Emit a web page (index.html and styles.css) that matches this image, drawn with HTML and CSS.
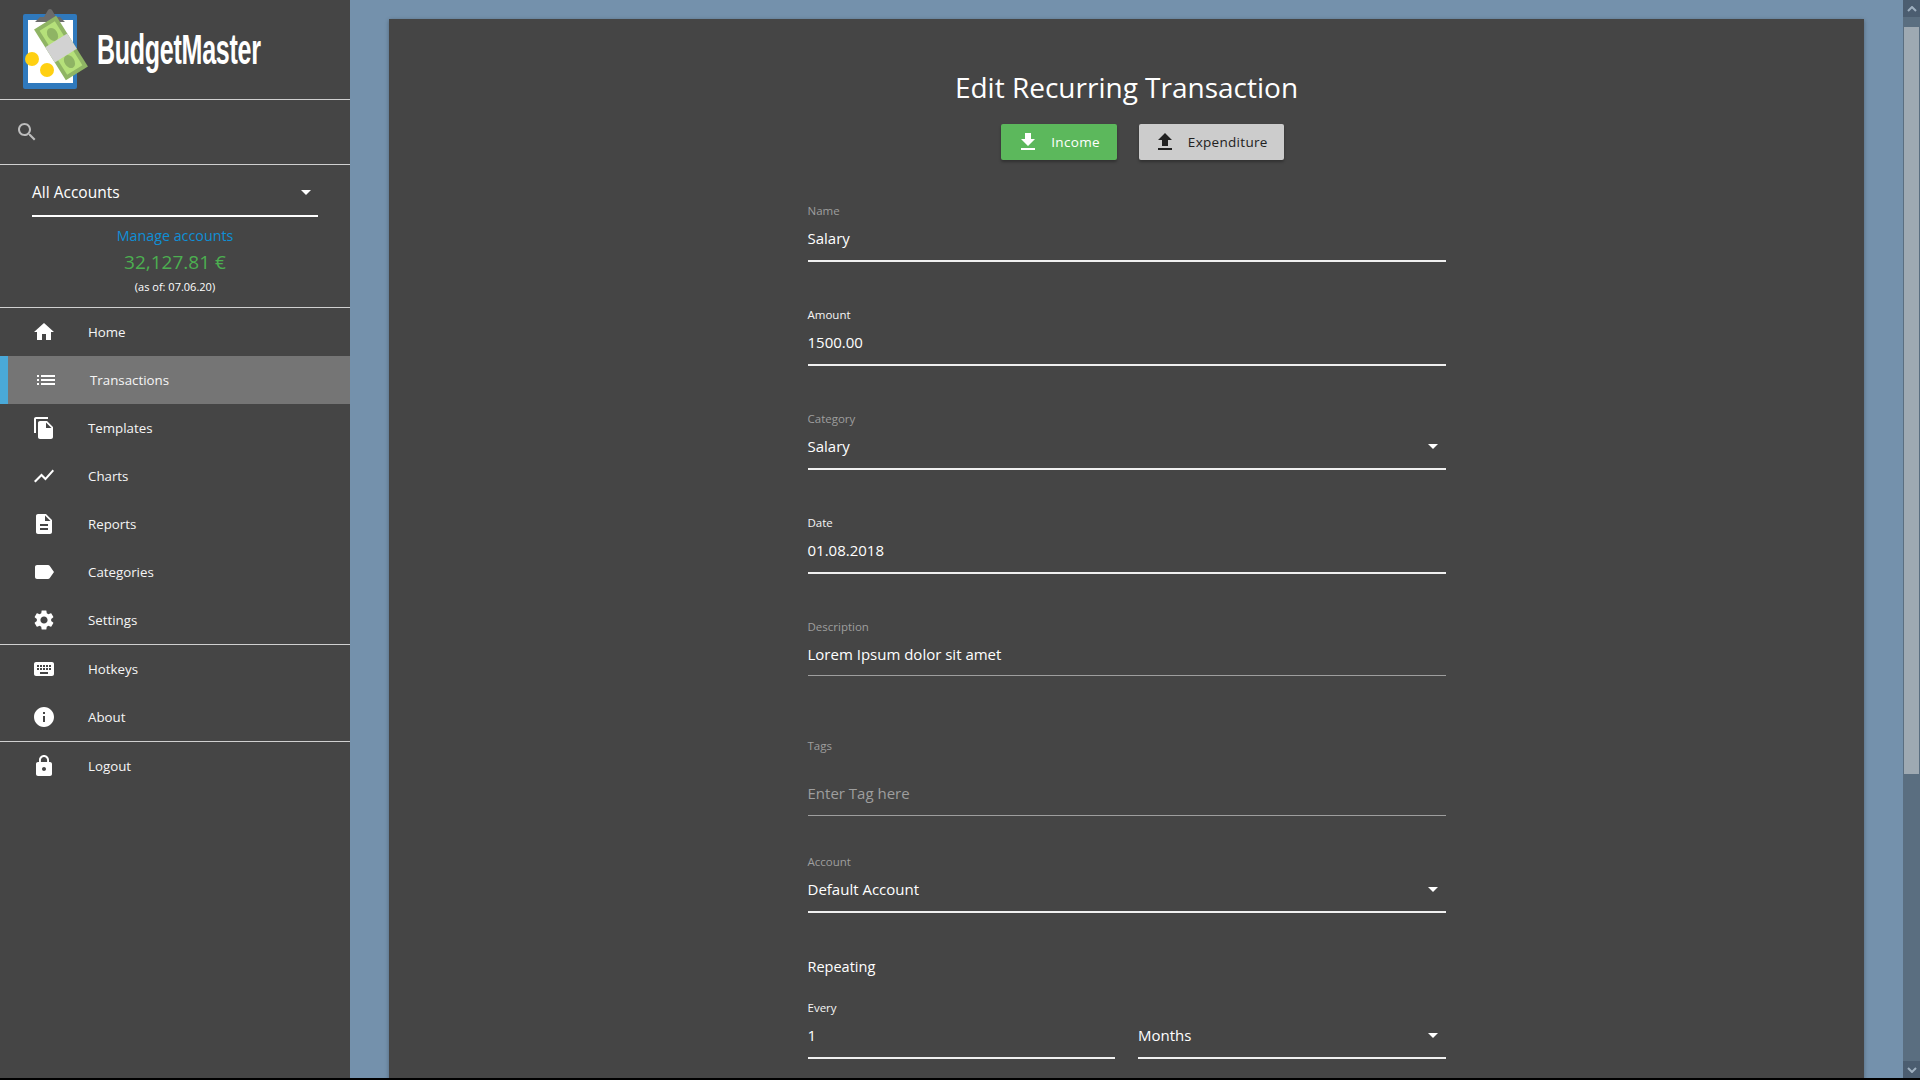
FILE: index.html
```html
<!DOCTYPE html>
<html lang="en">
<head>
    <meta charset="UTF-8">
    <meta name="viewport" content="width=device-width, initial-scale=1.0">
    <title>BudgetMaster - Edit Recurring Transaction</title>
    <link rel="stylesheet" href="styles.css">
</head>
<body>

<div class="app">
    <!-- Sidebar -->
    <nav class="sidebar">
        <div class="brand">
            <svg class="brand-logo" viewBox="0 0 70 84" width="70" height="84">
                <rect x="1" y="6" width="54" height="75" rx="2" fill="#2f79bd"/>
                <rect x="6" y="12" width="45" height="63" fill="#fff"/>
                <path d="M13 14l5-5h4l4-7q2-2 4 0l4 7h4l5 5z" fill="#6b6b6b"/>
                <g transform="rotate(-32 39 40)">
                    <rect x="26" y="10" width="26" height="60" fill="#8fb464"/>
                    <rect x="30" y="14" width="18" height="52" fill="#b5e07a"/>
                    <ellipse cx="39" cy="24" rx="5" ry="7" fill="#8fb464"/>
                    <ellipse cx="39" cy="56" rx="5" ry="7" fill="#8fb464"/>
                    <rect x="26" y="31" width="26" height="18" fill="#d2d2d2"/>
                </g>
                <circle cx="10" cy="51" r="7" fill="#ffd012"/>
                <circle cx="25" cy="62" r="7" fill="#ffd012"/>
            </svg>
            <span class="brand-name">BudgetMaster</span>
        </div>

        <div class="search">
            <svg class="search-icon" viewBox="0 0 24 24"><path d="M15.5 14h-.79l-.28-.27C15.41 12.59 16 11.11 16 9.5 16 5.91 13.09 3 9.5 3S3 5.91 3 9.5 5.91 16 9.5 16c1.61 0 3.09-.59 4.23-1.57l.27.28v.79l5 4.99L20.49 19l-4.99-5zm-6 0C7.01 14 5 11.99 5 9.5S7.01 5 9.5 5 14 7.01 14 9.5 11.99 14 9.5 14z"/></svg>
        </div>

        <div class="accounts">
            <div class="account-select">
                <span>All Accounts</span>
                <span class="caret"></span>
            </div>
            <a class="manage-link" href="#">Manage accounts</a>
            <div class="balance">32,127.81 €</div>
            <div class="balance-date">(as of: 07.06.20)</div>
        </div>

        <ul class="nav-group">
            <li class="nav-item"><svg class="nav-icon" viewBox="0 0 24 24"><path d="M10 20v-6h4v6h5v-8h3L12 3 2 12h3v8z"/></svg>Home</li>
            <li class="nav-item active"><svg class="nav-icon" viewBox="0 0 24 24"><path d="M3 13h2v-2H3v2zm0 4h2v-2H3v2zm0-8h2V7H3v2zm4 4h14v-2H7v2zm0 4h14v-2H7v2zM7 7v2h14V7H7z"/></svg>Transactions</li>
            <li class="nav-item"><svg class="nav-icon" viewBox="0 0 24 24"><path d="M16 1H4c-1.1 0-2 .9-2 2v14h2V3h12V1zm-1 4l6 6v10c0 1.1-.9 2-2 2H7.99C6.89 23 6 22.1 6 21l.01-14c0-1.1.89-2 1.99-2h7zm-1 7h5.5L14 6.5V12z"/></svg>Templates</li>
            <li class="nav-item"><svg class="nav-icon" viewBox="0 0 24 24"><path d="M3.5 18.49l6-6.01 4 4L22 6.92l-1.41-1.41-7.09 7.97-4-4L2 16.99z"/></svg>Charts</li>
            <li class="nav-item"><svg class="nav-icon" viewBox="0 0 24 24"><path d="M14 2H6c-1.1 0-1.99.9-1.99 2L4 20c0 1.1.89 2 1.99 2H18c1.1 0 2-.9 2-2V8l-6-6zm2 16H8v-2h8v2zm0-4H8v-2h8v2zm-3-5V3.5L18.5 9H13z"/></svg>Reports</li>
            <li class="nav-item"><svg class="nav-icon" viewBox="0 0 24 24"><path d="M17.63 5.84C17.27 5.33 16.67 5 16 5L5 5.01C3.9 5.01 3 5.9 3 7v10c0 1.1.9 1.99 2 1.99L16 19c.67 0 1.27-.33 1.63-.84L22 12l-4.37-6.16z"/></svg>Categories</li>
            <li class="nav-item"><svg class="nav-icon" viewBox="0 0 24 24"><path d="M19.14 12.94c.04-.3.06-.61.06-.94 0-.32-.02-.64-.07-.94l2.03-1.58c.18-.14.23-.41.12-.61l-1.92-3.32c-.12-.22-.37-.29-.59-.22l-2.39.96c-.5-.38-1.03-.7-1.62-.94l-.36-2.54c-.04-.24-.24-.41-.48-.41h-3.84c-.24 0-.43.17-.47.41l-.36 2.54c-.59.24-1.13.57-1.62.94l-2.39-.96c-.22-.08-.47 0-.59.22L2.74 8.87c-.12.21-.08.47.12.61l2.03 1.58c-.05.3-.09.63-.09.94s.02.64.07.94l-2.03 1.58c-.18.14-.23.41-.12.61l1.92 3.32c.12.22.37.29.59.22l2.39-.96c.5.38 1.03.7 1.62.94l.36 2.54c.05.24.24.41.48.41h3.84c.24 0 .44-.17.47-.41l.36-2.54c.59-.24 1.13-.56 1.62-.94l2.39.96c.22.08.47 0 .59-.22l1.92-3.32c.12-.22.07-.47-.12-.61l-2.01-1.58zM12 15.6c-1.98 0-3.6-1.62-3.6-3.6s1.62-3.6 3.6-3.6 3.6 1.62 3.6 3.6-1.62 3.6-3.6 3.6z"/></svg>Settings</li>
        </ul>
        <ul class="nav-group">
            <li class="nav-item"><svg class="nav-icon" viewBox="0 0 24 24"><path d="M20 5H4c-1.1 0-1.99.9-1.99 2L2 17c0 1.1.9 2 2 2h16c1.1 0 2-.9 2-2V7c0-1.1-.9-2-2-2zm-9 3h2v2h-2V8zm0 3h2v2h-2v-2zM8 8h2v2H8V8zm0 3h2v2H8v-2zm-1 2H5v-2h2v2zm0-3H5V8h2v2zm9 7H8v-2h8v2zm0-4h-2v-2h2v2zm0-3h-2V8h2v2zm3 3h-2v-2h2v2zm0-3h-2V8h2v2z"/></svg>Hotkeys</li>
            <li class="nav-item"><svg class="nav-icon" viewBox="0 0 24 24"><path d="M12 2C6.48 2 2 6.48 2 12s4.48 10 10 10 10-4.48 10-10S17.52 2 12 2zm1 15h-2v-6h2v6zm0-8h-2V7h2v2z"/></svg>About</li>
        </ul>
        <ul class="nav-group">
            <li class="nav-item"><svg class="nav-icon" viewBox="0 0 24 24"><path d="M18 8h-1V6c0-2.76-2.24-5-5-5S7 3.24 7 6v2H6c-1.1 0-2 .9-2 2v10c0 1.1.9 2 2 2h12c1.1 0 2-.9 2-2V10c0-1.1-.9-2-2-2zm-6 9c-1.1 0-2-.9-2-2s.9-2 2-2 2 .9 2 2-.9 2-2 2zm3.1-9H8.9V6c0-1.71 1.39-3.1 3.1-3.1 1.71 0 3.1 1.39 3.1 3.1v2z"/></svg>Logout</li>
        </ul>
    </nav>

    <!-- Main content -->
    <main class="main">
        <div class="card">
            <h1 class="title">Edit Recurring Transaction</h1>

            <div class="type-buttons">
                <button class="type-btn income">
                    <svg viewBox="0 0 24 24"><path d="M19 9h-4V3H9v6H5l7 7 7-7zM5 18v2h14v-2H5z"/></svg>
                    Income
                </button>
                <button class="type-btn expenditure">
                    <svg viewBox="0 0 24 24"><path d="M9 16h6v-6h4l-7-7-7 7h4v6zm-4 2h14v2H5z"/></svg>
                    Expenditure
                </button>
            </div>

            <form class="form">
                <div class="field">
                    <label class="field-label">Name</label>
                    <div class="field-value">Salary</div>
                </div>
                <div class="field">
                    <label class="field-label bright">Amount</label>
                    <div class="field-value">1500.00</div>
                </div>
                <div class="field">
                    <label class="field-label">Category</label>
                    <div class="field-value">Salary<span class="caret"></span></div>
                </div>
                <div class="field">
                    <label class="field-label bright">Date</label>
                    <div class="field-value">01.08.2018</div>
                </div>
                <div class="field thin description">
                    <label class="field-label">Description</label>
                    <div class="field-value">Lorem Ipsum dolor sit amet</div>
                </div>
                <div class="field thin tags">
                    <label class="field-label">Tags</label>
                    <div class="field-value placeholder">Enter Tag here</div>
                </div>
                <div class="field account">
                    <label class="field-label">Account</label>
                    <div class="field-value">Default Account<span class="caret"></span></div>
                </div>

                <div class="repeat-title">Repeating</div>
                <div class="repeat-row">
                    <div class="field">
                        <label class="field-label bright">Every</label>
                        <div class="field-value">1</div>
                    </div>
                    <div class="field">
                        <label class="field-label">&nbsp;</label>
                        <div class="field-value">Months<span class="caret"></span></div>
                    </div>
                </div>
            </form>
        </div>
    </main>

    <!-- Page scrollbar -->
    <div class="scrollbar">
        <div class="scroll-btn"><svg viewBox="0 0 10 6"><path d="M1 5l4-4 4 4" /></svg></div>
        <div class="scroll-track"><div class="scroll-thumb"></div></div>
        <div class="scroll-btn"><svg viewBox="0 0 10 6"><path d="M1 1l4 4 4-4" /></svg></div>
    </div>
</div>
<div class="taskbar-edge"></div>

</body>
</html>
```

FILE: styles.css
```css
/* Basic page layout */
html, body {
    height: 100%;
}

body {
    display: flex;
    flex-direction: column;
    margin: 0;
    overflow: hidden;
    background: #000;
    color: #fff;
    font-family: "Open Sans", "Noto Sans", sans-serif;
}

.app {
    display: flex;
    height: 1078px;
    background: #7491ac;
    overflow: hidden;
}

.taskbar-edge {
    height: 2px;
    background: #000;
}

/* Sidebar */
.sidebar {
    flex: 0 0 350px;
    min-width: 0;
    overflow: hidden;
    background: #454545;
}

.brand {
    display: flex;
    align-items: flex-start;
    height: 91px;
    padding: 8px 0 0 22px;
    border-bottom: 1px solid #d0d0d0;
}

.brand-logo {
    flex: none;
}

/* the real logo font is a condensed one, squeeze what we have */
.brand-name {
    margin: 19px 0 0 5px;
    font-family: "Liberation Sans", sans-serif;
    font-size: 42px;
    line-height: 46px;
    font-weight: bold;
    letter-spacing: -0.5px;
    white-space: nowrap;
    transform: scaleX(0.597);
    transform-origin: left top;
}

.search {
    display: flex;
    align-items: center;
    height: 64px;
    padding-left: 15px;
    border-bottom: 1px solid #d0d0d0;
}

.search-icon {
    width: 24px;
    height: 24px;
    fill: #bdbdbd;
}

.accounts {
    display: flex;
    flex-direction: column;
    align-items: center;
    height: 142px;
    border-bottom: 1px solid #d0d0d0;
}

.account-select {
    display: flex;
    align-items: center;
    justify-content: space-between;
    width: 286px;
    height: 46px;
    padding-top: 4px;
    border-bottom: 2px solid #fff;
    font-size: 15.5px;
}

.account-select .caret {
    margin-right: 7px;
}

.caret {
    width: 0;
    height: 0;
    border-left: 5px solid transparent;
    border-right: 5px solid transparent;
    border-top: 5px solid #fff;
}

.manage-link {
    margin-top: 9px;
    font-size: 14.3px;
    line-height: 20px;
    color: #0f8fd6;
    text-decoration: none;
}

.balance {
    margin-top: 4px;
    font-size: 19px;
    line-height: 25px;
    color: #4caf50;
}

.balance-date {
    margin-top: 4px;
    font-size: 11px;
    line-height: 16px;
}

.nav-group {
    margin: 0;
    padding: 0;
    list-style: none;
    border-bottom: 1px solid #d0d0d0;
}

.nav-group:last-child {
    border-bottom: none;
}

.nav-item {
    display: flex;
    align-items: center;
    gap: 32px;
    height: 48px;
    padding-left: 32px;
    font-size: 13.3px;
    color: #f5f5f5;
}

.nav-item.active {
    padding-left: 26px;
    border-left: 8px solid #4aa9d8;
    background: #757575;
}

.nav-icon {
    width: 24px;
    height: 24px;
    fill: #fff;
}

/* Main card */
.main {
    flex: 1;
    min-width: 0;
    padding: 19px 39px 0;
    overflow: hidden;
}

.card {
    display: flex;
    flex-direction: column;
    align-items: center;
    height: 1200px;
    background: #454545;
    box-shadow: 0 1px 4px rgba(0, 0, 0, 0.3);
}

.title {
    margin: 48px 0 0;
    font-size: 28px;
    line-height: 40px;
    font-weight: 400;
}

.type-buttons {
    display: flex;
    gap: 22px;
    margin: 17px 0 0 32px;
}

.type-btn {
    display: flex;
    align-items: center;
    gap: 11px;
    height: 36px;
    padding: 0 16px 0 14px;
    border: none;
    border-radius: 2px;
    font-family: inherit;
    font-size: 13.5px;
    font-weight: 500;
    letter-spacing: 0.3px;
    box-shadow: 0 2px 3px rgba(0, 0, 0, 0.3);
}

.type-btn svg {
    width: 24px;
    height: 24px;
    fill: currentColor;
}

.income {
    padding: 0 17px 0 15px;
    background: #5cb85c;
    color: #fff;
}

.expenditure {
    background: #cccccc;
    color: #212121;
}

/* Form */
.form {
    width: 638px;
    margin-top: 43px;
}

.field {
    height: 57px;
    margin-bottom: 45px;
    border-bottom: 2px solid #f0f0f0;
}

.field-label {
    display: block;
    font-size: 11.5px;
    line-height: 16px;
    color: #9e9e9e;
}

.field-label.bright {
    color: #f5f5f5;
}

.field-value {
    display: flex;
    align-items: center;
    justify-content: space-between;
    height: 24px;
    margin-top: 7px;
    font-size: 15px;
    line-height: 24px;
}

.field-value .caret {
    margin-right: 8px;
}

.field.thin {
    border-bottom: 1px solid #9e9e9e;
}

.field.description {
    height: 56px;
    margin-bottom: 62px;
}

.field.tags {
    height: 77px;
    margin-bottom: 38px;
}

.field.tags .field-value {
    margin-top: 27px;
}

.placeholder {
    color: #9e9e9e;
}

.field.account {
    margin-bottom: 0;
}

.repeat-title {
    margin-top: 42px;
    font-size: 14.5px;
    line-height: 24px;
}

.repeat-row {
    display: grid;
    grid-template-columns: 1fr 1fr;
    gap: 23px;
    margin-top: 21px;
}

/* Fake page scrollbar */
.scrollbar {
    display: flex;
    flex-direction: column;
    flex: 0 0 17px;
    background: #5a6e80;
}

.scroll-btn {
    display: flex;
    align-items: center;
    justify-content: center;
    height: 17px;
    background: #4b5d70;
}

.scroll-btn svg {
    width: 10px;
    height: 6px;
    fill: none;
    stroke: #9fb0c0;
    stroke-width: 2;
}

.scroll-track {
    flex: 1;
    padding: 10px 1px 0;
}

.scroll-thumb {
    height: 747px;
    background: #9ea9b2;
}
```
